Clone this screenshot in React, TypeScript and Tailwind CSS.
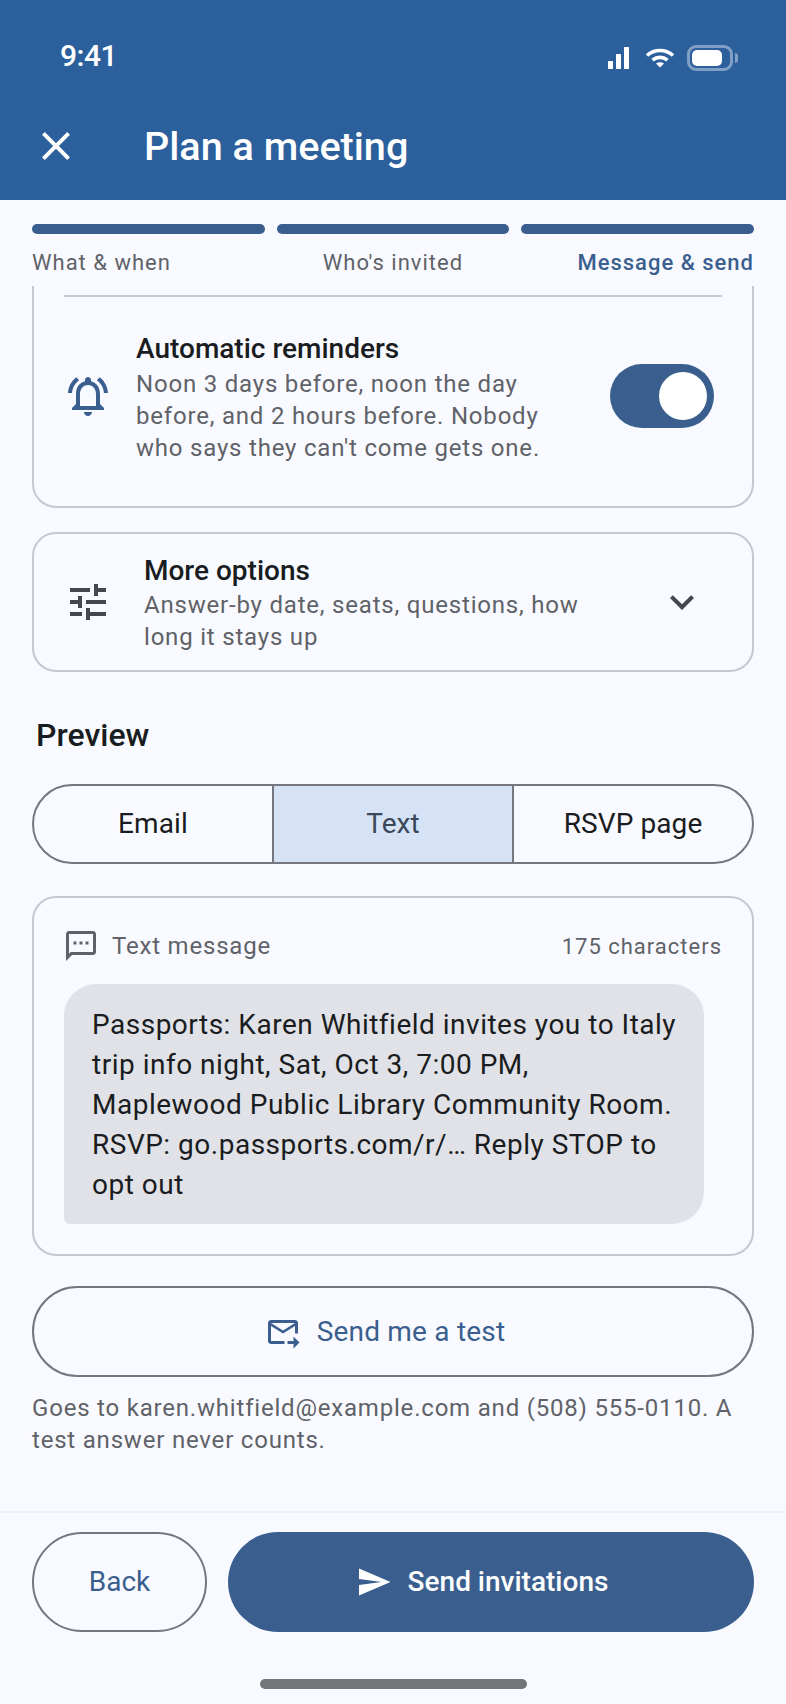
import type { ReactNode } from "react"

function MaterialIcon({ d, className }: { d: string; className: string }) {
  return (
    <svg viewBox="0 0 24 24" fill="currentColor" className={className}>
      <path d={d} />
    </svg>
  )
}

const icons = {
  close: "M19 6.41L17.59 5 12 10.59 6.41 5 5 6.41 10.59 12 5 17.59 6.41 19 12 13.41 17.59 19 19 17.59 13.41 12z",
  bell: "M7.58 4.08 6.15 2.65C3.75 4.48 2.17 7.3 2.03 10.5h2c.15-2.65 1.51-4.97 3.55-6.42zm12.39 6.42h2c-.15-3.2-1.73-6.02-4.12-7.85l-1.42 1.43c2.02 1.45 3.39 3.77 3.54 6.42zM18 11c0-3.07-1.64-5.64-4.5-6.32V4c0-.83-.67-1.5-1.5-1.5s-1.5.67-1.5 1.5v.68C7.63 5.36 6 7.92 6 11v5l-2 2v1h16v-1l-2-2v-5zm-2 6H8v-6c0-2.48 1.51-4.5 4-4.5s4 2.02 4 4.5v6zm-4 5c.14 0 .27-.01.4-.04.65-.14 1.18-.58 1.44-1.18.1-.24.15-.5.15-.78h-4c.01 1.1.9 2 2.01 2z",
  tune: "M3 17v2h6v-2H3zM3 5v2h10V5H3zm10 16v-2h8v-2h-8v-2h-2v6h2zM7 9v2H3v2h4v2h2V9H7zm14 4v-2H11v2h10zm-6-4h2V7h4V5h-4V3h-2v6z",
  chevron: "M16.59 8.59L12 13.17 7.41 8.59 6 10l6 6 6-6z",
  sms: "M20 2H4c-1.1 0-1.99.9-1.99 2L2 22l4-4h14c1.1 0 2-.9 2-2V4c0-1.1-.9-2-2-2zm0 14H5.17L4 17.17V4h16v12zM7 9h2v2H7zm8 0h2v2h-2zm-4 0h2v2h-2z",
  mail: "M20 4H4c-1.1 0-2 .9-2 2v12c0 1.1.9 2 2 2h9v-2H4V8l8 5 8-5v5h2V6c0-1.1-.9-2-2-2zm-8 7L4 6h16l-8 5zm7 4 4 4-4 4v-3h-4v-2h4v-3z",
  send: "M2.01 21L23 12 2.01 3 2 10l15 2-15 2z",
}

function StatusIcons() {
  return (
    <div className="flex items-center">
      <svg viewBox="0 0 21 22" className="w-[21px] h-[22px]" fill="white">
        <rect x="0" y="14" width="5" height="8" rx="0.5" />
        <rect x="8" y="7" width="5" height="15" rx="0.5" />
        <rect x="16" y="0" width="5" height="22" rx="0.5" />
      </svg>
      <svg viewBox="0 0 30 20" className="ml-4 w-[30px] h-[20px]" fill="none" stroke="white" strokeWidth="3.6">
        <path d="M2 7.5C9.5 .8 20.5 .8 28 7.5" />
        <path d="M7.5 12.2C12 8.4 18 8.4 22.5 12.2" />
        <path d="M11 15.6 15 19.6 19 15.6C16.6 13.7 13.4 13.7 11 15.6Z" fill="white" stroke="none" />
      </svg>
      <div className="ml-3 flex items-center">
        <div className="w-[46px] h-[26px] rounded-[9px] border-[3px] border-white/40 p-[2px] pr-[8px]">
          <div className="h-full rounded-[5px] bg-white" />
        </div>
        <div className="ml-[2px] w-[3px] h-[10px] rounded-r-full bg-white/40" />
      </div>
    </div>
  )
}

function Card({ children, className }: { children: ReactNode; className: string }) {
  return <div className={`rounded-[24px] border-2 border-[#c6c8ce] ${className}`}>{children}</div>
}

export default function App() {
  return (
    <div className="flex h-[1704px] w-[786px] flex-col overflow-hidden bg-[#f9faff] font-['Roboto',sans-serif]">
      <header className="h-[200px] shrink-0 bg-[#2c609d] text-white">
        <div className="flex h-[120px] items-start justify-between pl-[60px] pr-[48px] pt-[38px]">
          <span className="text-[30px] font-medium leading-[36px] tracking-[-0.5px]">9:41</span>
          <div className="pt-[7px]">
            <StatusIcons />
          </div>
        </div>
        <div className="flex items-center pl-[32px]">
          <MaterialIcon d={icons.close} className="size-[48px]" />
          <h1 className="ml-[64px] pt-[2px] text-[39.6px] font-medium leading-[50px]">Plan a meeting</h1>
        </div>
      </header>

      <div className="shrink-0 px-[32px] pt-[24px]">
        <div className="grid grid-cols-3 gap-[12px]">
          <div className="h-[10px] rounded-full bg-[#3a5f8f]" />
          <div className="h-[10px] rounded-full bg-[#3a5f8f]" />
          <div className="h-[10px] rounded-full bg-[#3a5f8f]" />
        </div>
        <div className="mt-[13px] grid grid-cols-3 gap-[12px] text-[22px] leading-[32px] tracking-[1px] text-[#5f6268]">
          <span>What &amp; when</span>
          <span className="text-center">Who's invited</span>
          <span className="whitespace-nowrap text-right font-medium text-[#3a5f8f]">Message &amp; send</span>
        </div>
      </div>

      <main className="min-h-0 flex-1 overflow-hidden px-[32px]">
        <div className="mt-[7px]">
          <Card className="h-[222px] rounded-t-none border-t-0 px-[30px] pt-[9px]">
            <div className="h-[2px] bg-[#c6c8ce]" />
            <div className="mt-[33px] flex items-center">
              <MaterialIcon d={icons.bell} className="size-[48px] shrink-0 text-[#3a5f8f]" />
              <div className="ml-[24px] -mb-[2px] w-[430px] shrink-0">
                <div className="text-[28px] font-medium leading-[38px] text-[#191c20]">Automatic reminders</div>
                <p className="text-[24px] leading-[32px] tracking-[0.8px] text-[#5f6268]">
                  Noon 3 days before, noon the day before, and 2 hours before. Nobody who says they can't come gets one.
                </p>
              </div>
              <div className="ml-auto mr-[8px] flex h-[64px] w-[104px] shrink-0 items-center justify-end rounded-full bg-[#3a5f8f] pr-[7px]">
                <div className="size-[48px] rounded-full bg-white" />
              </div>
            </div>
          </Card>

          <Card className="mt-[24px] flex h-[140px] items-center pl-[30px] pr-[46px]">
            <MaterialIcon d={icons.tune} className="size-[48px] shrink-0 text-[#44474c]" />
            <div className="ml-[32px] min-w-0 flex-1 pt-[2px]">
              <div className="text-[28px] font-medium leading-[36px] text-[#191c20]">More options</div>
              <p className="w-[460px] text-[24px] leading-[32px] tracking-[0.8px] text-[#5f6268]">
                Answer-by date, seats, questions, how long it stays up
              </p>
            </div>
            <MaterialIcon d={icons.chevron} className="size-[48px] shrink-0 text-[#44474c]" />
          </Card>

          <h2 className="mt-[43px] pl-[4px] text-[32px] font-medium leading-[40px] text-[#191c20]">Preview</h2>

          <div className="mt-[29px] grid h-[80px] grid-cols-[238px_242px_1fr] overflow-hidden rounded-full border-2 border-[#74777f] text-[28px] tracking-[0.1px]">
            <div className="flex items-center justify-center text-[#191c20]">Email</div>
            <div className="flex items-center justify-center border-x-2 border-[#74777f] bg-[#d6e3f7] text-[#3a485c]">Text</div>
            <div className="flex items-center justify-center text-[#191c20]">RSVP page</div>
          </div>

          <Card className="mt-[32px] h-[360px] px-[30px] pt-[30px]">
            <div className="flex h-[36px] items-center justify-between">
              <div className="flex items-center">
                <MaterialIcon d={icons.sms} className="-ml-[1px] size-[36px] text-[#5f6268]" />
                <span className="ml-[13px] text-[24px] tracking-[0.8px] text-[#5f6268]">Text message</span>
              </div>
              <span className="text-[22px] tracking-[1px] text-[#5f6268]">175 characters</span>
            </div>
            <div className="mt-[20px] w-[640px] rounded-[32px] rounded-bl-[6px] bg-[#e1e2e7] pb-[19px] pl-[28px] pr-[20px] pt-[21px] text-[28px] leading-[40px] tracking-[0.5px] text-[#191c20]">
              Passports: Karen Whitfield invites you to Italy trip info night, Sat, Oct 3, 7:00 PM, Maplewood Public Library Community Room. RSVP: go.passports.com/r/… Reply STOP to opt out
            </div>
          </Card>

          <button className="mt-[30px] flex h-[91px] w-full items-center justify-center rounded-full border-2 border-[#74777f] pr-[16px] text-[28px] tracking-[0.2px] text-[#3a5f8f]">
            <MaterialIcon d={icons.mail} className="size-[36px]" />
            <span className="ml-[16px]">Send me a test</span>
          </button>

          <p className="mt-[15px] text-[24px] leading-[32px] tracking-[0.8px] text-[#5f6268]">
            Goes to karen.whitfield@example.com and (508) 555-0110. A test answer never counts.
          </p>
        </div>
      </main>

      <footer className="h-[193px] shrink-0 border-t-2 border-[#f1f2f6] px-[32px] pt-[19px]">
        <div className="flex h-[100px] gap-[21px]">
          <button className="w-[175px] rounded-full border-2 border-[#74777f] text-[28px] text-[#3a5f8f]">Back</button>
          <button className="flex flex-1 items-center justify-center rounded-full bg-[#3a5f8f] pr-[18px] text-[28px] font-medium text-white">
            <MaterialIcon d={icons.send} className="size-[36px]" />
            <span className="ml-[16px]">Send invitations</span>
          </button>
        </div>
        <div className="mx-auto mt-[47px] h-[10px] w-[267px] rounded-full bg-[#747578]" />
      </footer>
    </div>
  )
}
